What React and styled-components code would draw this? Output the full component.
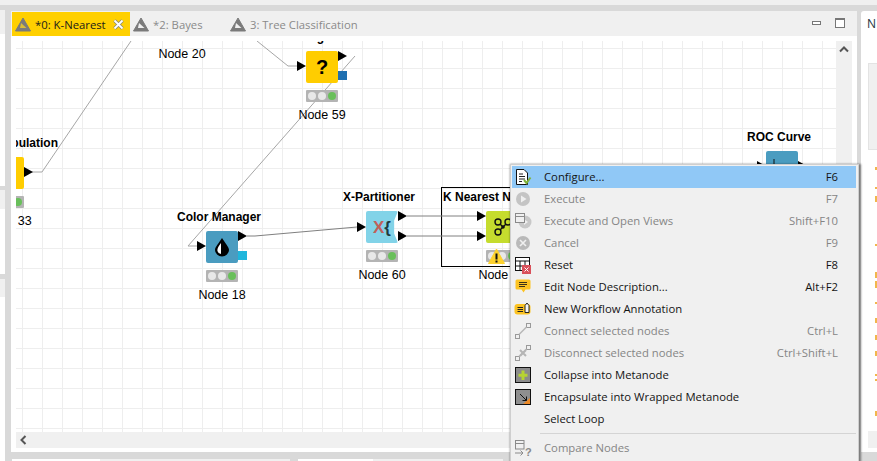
import React from 'react';
import styled, { createGlobalStyle } from 'styled-components';

const Global = createGlobalStyle`
  html, body {
    margin: 0;
    width: 877px;
    height: 461px;
    overflow: hidden;
    background: #d9d9d9;
  }
  * { box-sizing: border-box; }
`;

const UI_FONT = `"Open Sans", "Noto Sans", sans-serif`;
const NODE_FONT = `"Liberation Sans", Arial, sans-serif`;

const Page = styled.div`
  width: 877px;
  height: 461px;
  overflow: hidden;
  display: flex;
  flex-direction: column;
  background: #d9d9d9;
`;

const TopStrip = styled.div`
  height: 5px;
  flex: none;
  background: #f0f0f0;
`;

const Main = styled.div`
  flex: 1;
  display: flex;
  padding-top: 5px;
  min-height: 0;
`;

const LeftDock = styled.div`
  width: 5px;
  flex: none;
  display: flex;
  flex-direction: column;
`;

const DockPiece = styled.div`
  height: ${(p) => p.$h}px;
  margin-top: ${(p) => p.$gap || 0}px;
  background: ${(p) => (p.$tab ? '#f0f0f0' : '#fff')};
`;

const Center = styled.div`
  width: 846px;
  margin-left: 6px;
  margin-top: 1px;
  flex: none;
  display: flex;
  flex-direction: column;
`;

const Editor = styled.div`
  height: 441px;
  flex: none;
  background: #fff;
  display: flex;
  flex-direction: column;
  border-radius: 3px 3px 0 0;
`;

const TabBar = styled.div`
  height: 25px;
  flex: none;
  background: #f0f0f0;
  display: flex;
  align-items: stretch;
  padding: 1px 0 0 1px;
  font-family: ${UI_FONT};
  font-size: 11.3px;
`;

const Tab = styled.div`
  width: ${(p) => p.$w}px;
  flex: none;
  display: flex;
  align-items: center;
  gap: 4px;
  padding-left: 3px;
  color: ${(p) => (p.$active ? '#1a1a1a' : '#8a8a8a')};
  background: ${(p) => (p.$active ? '#ffd000' : 'transparent')};
  white-space: nowrap;

  svg {
    flex: none;
  }
`;

const TabClose = styled.svg`
  margin-left: 3px;
`;

const TabActions = styled.div`
  margin-left: auto;
  display: flex;
  align-items: center;
  gap: 14px;
  padding-right: 12px;
  padding-bottom: 3px;
`;

const MinButton = styled.div`
  width: 9px;
  height: 4px;
  background: #fff;
  border: 1px solid #777;
`;

const MaxButton = styled.div`
  width: 10px;
  height: 10px;
  background: #fff;
  border: 1px solid #777;
  border-top-width: 2px;
`;

const EditorBody = styled.div`
  flex: 1;
  min-height: 0;
  display: grid;
  grid-template-columns: 820px 16px;
  grid-template-rows: 391px 16px;
  padding: 5px 5px 4px 5px;
`;

const Canvas = styled.div`
  position: relative;
  overflow: hidden;
  background-color: #fff;
  background-image:
    linear-gradient(to right, #eeeeee 1px, transparent 1px),
    linear-gradient(to bottom, #eeeeee 1px, transparent 1px);
  background-size: 20px 20px;
  background-position: 6px 7px;
`;

const Scroll = styled.div`
  background: #f0f0f0;
  display: flex;
  align-items: flex-start;
  padding: ${(p) => (p.$horizontal ? '3px 0 0 3px' : '4px 0 0 3px')};
`;

const Corner = styled.div`
  background: #fff;
`;

const Wires = styled.svg`
  position: absolute;
  left: 0;
  top: 0;
  pointer-events: none;
`;

const Annotation = styled.div`
  position: absolute;
  left: 425px;
  top: 146px;
  width: 110px;
  height: 80px;
  border: 1px solid #000;
`;

const NodeWrap = styled.div`
  position: absolute;
  left: ${(p) => p.$x}px;
  top: ${(p) => p.$y}px;
  width: 32px;
  display: flex;
  flex-direction: column;
  align-items: center;
  font-family: ${NODE_FONT};
  font-size: 12.5px;
  color: #000;
`;

const NodeTitle = styled.div`
  position: absolute;
  left: 50%;
  bottom: 100%;
  margin-bottom: 7px;
  transform: translateX(calc(-50% - ${(p) => p.$shift || 3}px));
  font-size: 12px;
  font-weight: bold;
  white-space: nowrap;
  line-height: 14px;
`;

const NodeBody = styled.div`
  position: relative;
  width: 32px;
  height: 32px;
  flex: none;
  display: flex;
  align-items: center;
  justify-content: center;
`;

const NodeFace = styled.div`
  width: 32px;
  height: 32px;
  border-radius: 2px;
  background: ${(p) => p.$color};
  display: flex;
  align-items: center;
  justify-content: center;
  clip-path: ${(p) =>
    p.$notch
      ? 'polygon(0 0, 100% 0, 88% 30%, 88% 70%, 100% 100%, 0 100%)'
      : 'none'};
`;

const Port = styled.div`
  position: absolute;
  top: ${(p) => p.$y - 5}px;
  left: ${(p) => (p.$out ? 32 : -9)}px;
  width: 0;
  height: 0;
  border-top: 5px solid transparent;
  border-bottom: 5px solid transparent;
  border-left: 9px solid #000;
`;

const ModelPort = styled.div`
  position: absolute;
  left: 32px;
  top: 20px;
  width: 9px;
  height: 9px;
  background: ${(p) => p.$color};
`;

const Status = styled.div`
  margin-top: 7px;
  width: 32px;
  height: 12px;
  flex: none;
  background: #b4b4b4;
  border-radius: 1px;
  display: flex;
  align-items: center;
  justify-content: center;
  gap: 2px;
`;

const Light = styled.span`
  width: 8px;
  height: 8px;
  border-radius: 50%;
  background: ${(p) => (p.$on ? '#69bf5b' : '#e8e8e8')};
`;

const NodeLabel = styled.div`
  margin-top: 6px;
  white-space: nowrap;
  line-height: 14px;
`;

const WarnIcon = styled.svg`
  position: absolute;
  left: 2px;
  top: 37px;
`;

const Glyph = styled.span`
  font-family: ${NODE_FONT};
  font-weight: bold;
  font-size: ${(p) => p.$size}px;
  line-height: 1;
  color: ${(p) => p.$color || '#000'};
`;

const BottomTabs = styled.div`
  margin-top: 7px;
  height: 2px;
  flex: none;
  display: flex;
  padding-left: 1px;
`;

const BottomTab = styled.div`
  width: ${(p) => p.$w}px;
  margin-left: ${(p) => p.$gap || 0}px;
  background: ${(p) => (p.$tab ? '#f0f0f0' : '#fff')};
`;

const RightDock = styled.div`
  margin-left: 4px;
  margin-top: 1px;
  width: 16px;
  height: 441px;
  flex: none;
  background: #fff;
  display: flex;
  flex-direction: column;
  padding-left: 7px;
  border-radius: 3px 0 0 0;
`;

const DockTitle = styled.div`
  height: 25px;
  margin-left: -1px;
  flex: none;
  font-family: ${UI_FONT};
  font-size: 12px;
  line-height: 25px;
  color: #24323c;
  overflow: hidden;
`;

const SearchBox = styled.div`
  height: 87px;
  margin-top: 27px;
  flex: none;
  background: #f0f0f0;
  border: 1px solid #e3e3e3;
  border-right: 0;
`;

const Tick = styled.div`
  width: 2px;
  height: ${(p) => p.$h || 3}px;
  margin-left: 7px;
  margin-top: ${(p) => p.$gap}px;
  flex: none;
  background: #f1b74c;
`;

const DockFooter = styled.div`
  height: 17px;
  margin-top: auto;
  margin-bottom: 4px;
  flex: none;
  background: #f0f0f0;
`;

const Menu = styled.div`
  position: absolute;
  left: 510px;
  top: 164px;
  width: 349px;
  height: 310px;
  background: #f0f0f0;
  border: 1px solid #cfcfcf;
  box-shadow: 1px 1px 2px 1px rgba(0, 0, 0, 0.45);
  padding: 1px 2px 0 1px;
  font-family: ${UI_FONT};
  font-size: 11.3px;
`;

const MenuRow = styled.div`
  height: 22px;
  display: flex;
  align-items: center;
  padding-right: 18px;
  white-space: nowrap;
  background: ${(p) => (p.$hover ? '#90c8f6' : 'transparent')};
  color: ${(p) => (p.$off ? '#858585' : '#141414')};
`;

const MenuIcon = styled.span`
  width: 32px;
  height: 18px;
  flex: none;
  display: flex;
  justify-content: flex-start;
  padding-left: 2px;
`;

const MenuText = styled.span`
  margin-bottom: 2px;
`;

const MenuShortcut = styled.span`
  margin-left: auto;
  margin-bottom: 2px;
`;

const MenuLine = styled.div`
  height: 1px;
  margin: 3px 0 3px 28px;
  background: #d4d4d4;
`;

const Chevron = ({ d }) => (
  <svg width="10" height="10" viewBox="0 0 10 10">
    <path d={d} fill="none" stroke="#555" strokeWidth="2" />
  </svg>
);

const TabIcon = ({ active }) => (
  <svg width="16" height="15" viewBox="0 0 16 15">
    <path d="M8 1 L15.5 14 H0.5 Z" fill="#7b7b7b" stroke="#7b7b7b" strokeLinejoin="round" />
    <path d="M6 6 L11.5 11 H5 Z" fill={active ? '#d8bd3c' : '#f0f0f0'} />
  </svg>
);

const DocIcon = () => (
  <svg width="18" height="18" viewBox="0 0 18 18">
    <path d="M2.5 1.5 H10 L13.5 5 V16.5 H2.5 Z" fill="#fff" stroke="#111" />
    <path d="M5 6 H9 M5 8.5 H11 M5 11 H11 M5 13.5 H8" stroke="#222" />
    <path d="M10 12 L12.5 15 L16.5 9.5" fill="none" stroke="#7fb23a" strokeWidth="2" />
  </svg>
);

const RunIcon = () => (
  <svg width="18" height="18" viewBox="0 0 18 18">
    <circle cx="9" cy="9" r="7" fill="#c4c4c4" />
    <path d="M7 5.5 L12.5 9 L7 12.5 Z" fill="#efefef" />
  </svg>
);

const RunViewIcon = () => (
  <svg width="18" height="18" viewBox="0 0 18 18">
    <circle cx="11" cy="10" r="6.5" fill="#c8c8c8" />
    <path d="M10 7 L14 10 L10 13 Z" fill="#efefef" />
    <rect x="1.5" y="1.5" width="9" height="9" fill="#f0f0f0" stroke="#8a8a8a" />
    <path d="M1.5 4.5 H10.5" stroke="#8a8a8a" />
  </svg>
);

const CancelIcon = () => (
  <svg width="18" height="18" viewBox="0 0 18 18">
    <circle cx="9" cy="9" r="7" fill="#b9b9b9" />
    <path d="M6 6 L12 12 M12 6 L6 12" stroke="#f0f0f0" strokeWidth="1.6" />
  </svg>
);

const ResetIcon = () => (
  <svg width="18" height="18" viewBox="0 0 18 18">
    <rect x="1.5" y="1.5" width="14" height="13" fill="#fff" stroke="#111" />
    <path d="M1.5 5 H15.5 M1.5 10 H15.5 M6 5 V14.5 M11 5 V14.5" stroke="#111" />
    <rect x="8" y="9" width="9" height="9" fill="#d9505a" />
    <path d="M10.5 11.5 L14.5 15.5 M14.5 11.5 L10.5 15.5" stroke="#fff" />
  </svg>
);

const NoteIcon = () => (
  <svg width="18" height="18" viewBox="0 0 18 18">
    <path d="M3 1.5 H15 Q16.5 1.5 16.5 3 V10 Q16.5 11.5 15 11.5 H11.5 L9.5 14.5 L7.5 11.5 H3 Q1.5 11.5 1.5 10 V3 Q1.5 1.5 3 1.5 Z" fill="#fcc322" />
    <path d="M5 4.5 H13 M5 6.5 H13 M5 8.5 H11" stroke="#3a3218" />
  </svg>
);

const AnnotationIcon = () => (
  <svg width="18" height="18" viewBox="0 0 18 18">
    <rect x="0.5" y="4" width="16" height="10.5" rx="3" fill="#fcc322" />
    <path d="M3.5 7.5 H9 M3.5 9.5 H9 M3.5 11.5 H9" stroke="#222" />
    <path d="M11 5.5 L13 3 L15 5.5 V12.5 H11 Z" fill="#f5f5f5" stroke="#222" />
  </svg>
);

const ConnectIcon = ({ cut }) => (
  <svg width="18" height="18" viewBox="0 0 18 18">
    <rect x="1.5" y="12.5" width="4" height="4" fill="#f0f0f0" stroke="#9a9a9a" />
    <rect x="12.5" y="1.5" width="4" height="4" fill="#f0f0f0" stroke="#9a9a9a" />
    <path d="M5 12.5 L12.5 5" stroke="#b5b5b5" strokeWidth="1.4" />
    {cut && <path d="M6 6 L12 12 M12 6 L6 12" stroke="#b5b5b5" strokeWidth="2" />}
  </svg>
);

const CollapseIcon = () => (
  <svg width="18" height="18" viewBox="0 0 18 18">
    <rect x="1.5" y="1.5" width="15" height="15" fill="#8b8b8b" stroke="#111" />
    <path d="M9 4.5 V14 M4.5 9.2 H13.5" stroke="#b7d332" strokeWidth="3" />
  </svg>
);

const EncapsulateIcon = () => (
  <svg width="18" height="18" viewBox="0 0 18 18">
    <rect x="1.5" y="1.5" width="15" height="15" fill="#8f8f8f" stroke="#111" />
    <path d="M16 10 V16 H9 Z" fill="#ee8a26" />
    <path d="M6 6 L12.5 12.5 M8.5 12.5 H12.5 V8.5" fill="none" stroke="#111" />
  </svg>
);

const CompareIcon = () => (
  <svg width="18" height="18" viewBox="0 0 18 18">
    <rect x="1.5" y="1.5" width="8.5" height="8.5" fill="none" stroke="#8a8a8a" />
    <path d="M1.5 4.5 H10 M1 14 H9 M6.5 11.5 L9 14 L6.5 16.5" fill="none" stroke="#8a8a8a" />
    <text x="11" y="17" fontFamily="Liberation Sans" fontWeight="bold" fontSize="11" fill="#8a8a8a">?</text>
  </svg>
);

const Drop = () => (
  <svg width="18" height="20" viewBox="0 0 18 20">
    <path d="M9 1 C12 6 16 10 16 13 A7 6.5 0 0 1 2 13 C2 10 6 6 9 1 Z" fill="#000" />
    <path d="M8 6 C6 9 4 11 4.4 14 A4.5 4 0 0 0 8 17 Z" fill="#fff" />
  </svg>
);

const NetIcon = () => (
  <svg width="28" height="24" viewBox="0 0 28 24">
    <path d="M12 9 L15 12 L12 15 M15 12 L18 9" fill="none" stroke="#111" strokeWidth="1.4" />
    <circle cx="10" cy="7" r="3" fill="none" stroke="#111" strokeWidth="1.4" />
    <circle cx="10" cy="17" r="3" fill="none" stroke="#111" strokeWidth="1.4" />
    <circle cx="20" cy="7" r="3" fill="none" stroke="#111" strokeWidth="1.4" />
    <circle cx="15" cy="12" r="1.8" fill="#111" />
  </svg>
);

const RocIcon = () => (
  <svg width="32" height="32" viewBox="0 0 32 32">
    <path d="M8 8 V28 M4 24 H28" stroke="#111" />
    <path d="M14 13 H24 V20 H14 Z" fill="#d9606a" />
  </svg>
);

const Warn = () => (
  <WarnIcon width="17" height="16" viewBox="0 0 17 16">
    <path d="M8.5 1 L16.5 15.5 H0.5 Z" fill="#fdd22e" stroke="#fdd22e" strokeLinejoin="round" />
    <rect x="7.5" y="5.5" width="2" height="6" fill="#111" />
    <rect x="7.5" y="12.5" width="2" height="2" fill="#111" />
  </WarnIcon>
);

const wires = [
  { d: 'M115 0 L26 131 L8 131' },
  { d: 'M241 0 L272 25 L281 25' },
  { d: 'M339 15 L172 205 L181 205' },
  { d: 'M231 195 L239 195 L341 186', dark: true },
  { d: 'M391 175 L461 175', dark: true },
  { d: 'M391 195 L461 195', dark: true },
];

const nodes = [
  { id: 20, x: 150, y: -51, color: '#4a9cc0', label: 'Node 20' },
  {
    id: 59, x: 290, y: 10, color: '#ffcd00', label: 'Node 59', title: 'Missing Value',
    inputs: [15], outputs: [5], model: '#1f6fb0', icon: <Glyph $size={20}>?</Glyph>,
  },
  {
    id: 33, x: -24, y: 116, color: '#ffcd00', label: 'Node 33', title: 'Column Population', shift: 5,
    outputs: [15],
  },
  {
    id: 18, x: 190, y: 190, color: '#4a9cc0', label: 'Node 18', title: 'Color Manager',
    inputs: [15], outputs: [5], model: '#1fb6dc', icon: <Drop />,
  },
  {
    id: 60, x: 350, y: 170, color: '#82d3e8', label: 'Node 60', title: 'X-Partitioner', notch: true,
    inputs: [16], outputs: [5, 25],
    icon: (
      <>
        <Glyph $size={17} $color="#c0605a">X</Glyph>
        <Glyph $size={17} $color="#1d3b3f">{'{'}</Glyph>
      </>
    ),
  },
  {
    id: 61, x: 470, y: 170, color: '#c5dc2e', label: 'Node 61', title: 'K Nearest Neighbor',
    inputs: [5, 25], warn: true, icon: <NetIcon />,
  },
  {
    id: 62, x: 750, y: 110, color: '#4a9cc0', label: 'Node 62', title: 'ROC Curve',
    inputs: [15], outputs: [15], icon: <RocIcon />,
  },
];

const menu = [
  { icon: <DocIcon />, text: 'Configure...', key: 'F6', hover: true },
  { icon: <RunIcon />, text: 'Execute', key: 'F7', off: true },
  { icon: <RunViewIcon />, text: 'Execute and Open Views', key: 'Shift+F10', off: true },
  { icon: <CancelIcon />, text: 'Cancel', key: 'F9', off: true },
  { icon: <ResetIcon />, text: 'Reset', key: 'F8' },
  { icon: <NoteIcon />, text: 'Edit Node Description...', key: 'Alt+F2' },
  { icon: <AnnotationIcon />, text: 'New Workflow Annotation' },
  { icon: <ConnectIcon />, text: 'Connect selected nodes', key: 'Ctrl+L', off: true },
  { icon: <ConnectIcon cut />, text: 'Disconnect selected nodes', key: 'Ctrl+Shift+L', off: true },
  { icon: <CollapseIcon />, text: 'Collapse into Metanode' },
  { icon: <EncapsulateIcon />, text: 'Encapsulate into Wrapped Metanode' },
  { text: 'Select Loop' },
  { line: true },
  { icon: <CompareIcon />, text: 'Compare Nodes', off: true },
];

const ticks = [
  { gap: 17 }, { gap: 17, h: 2 }, { gap: 7, h: 6 }, { gap: 42, h: 2 }, { gap: 26, h: 6 },
  { gap: 3, h: 7 }, { gap: 14, h: 2 }, { gap: 14, h: 5 }, { gap: 12, h: 5 }, { gap: 11, h: 5 },
  { gap: 18, h: 2 }, { gap: 3, h: 2 }, { gap: 30, h: 5 },
];

const Node = ({ node }) => (
  <NodeWrap $x={node.x} $y={node.y}>
    {node.title && <NodeTitle $shift={node.shift}>{node.title}</NodeTitle>}
    <NodeBody>
      {(node.inputs || []).map((y) => <Port key={y} $y={y} />)}
      {(node.outputs || []).map((y) => <Port key={y} $y={y} $out />)}
      {node.model && <ModelPort $color={node.model} />}
      <NodeFace $color={node.color} $notch={node.notch}>{node.icon}</NodeFace>
    </NodeBody>
    <Status>
      <Light />
      <Light />
      <Light $on />
    </Status>
    {node.warn && <Warn />}
    <NodeLabel>{node.label}</NodeLabel>
  </NodeWrap>
);

export default function App() {
  return (
    <Page>
      <Global />
      <TopStrip />
      <Main>
        <LeftDock>
          <DockPiece $tab $h={25} />
          <DockPiece $h={155} />
          <DockPiece $tab $gap={4} $h={19} />
          <DockPiece $h={67} />
          <DockPiece $tab $gap={5} $h={18} />
          <DockPiece $h={168} />
        </LeftDock>
        <Center>
          <Editor>
            <TabBar>
              <Tab $active $w={118}>
                <TabIcon active />
                *0: K-Nearest
                <TabClose width="11" height="11" viewBox="0 0 11 11">
                  <path d="M1.5 1.5 L9.5 9.5 M9.5 1.5 L1.5 9.5" stroke="#8a8a70" strokeWidth="3.4" />
                  <path d="M1.5 1.5 L9.5 9.5 M9.5 1.5 L1.5 9.5" stroke="#fff" strokeWidth="1.8" />
                </TabClose>
              </Tab>
              <Tab $w={97}><TabIcon />*2: Bayes</Tab>
              <Tab $w={140}><TabIcon />3: Tree Classification</Tab>
              <TabActions>
                <MinButton />
                <MaxButton />
              </TabActions>
            </TabBar>
            <EditorBody>
              <Canvas>
                <Annotation />
                <Wires width="820" height="391" viewBox="0 0 820 391">
                  {wires.map((w) => (
                    <path key={w.d} d={w.d} fill="none" stroke={w.dark ? '#808080' : '#a6a6a6'} strokeWidth="1" />
                  ))}
                </Wires>
                {nodes.map((n) => <Node key={n.id} node={n} />)}
              </Canvas>
              <Scroll>
                <Chevron d="M1 6.5 L5 2.5 L9 6.5" />
              </Scroll>
              <Scroll $horizontal>
                <Chevron d="M6.5 1 L2.5 5 L6.5 9" />
              </Scroll>
              <Corner />
            </EditorBody>
          </Editor>
          <BottomTabs>
            <BottomTab $w={88} />
            <BottomTab $tab $w={190} />
            <BottomTab $gap={8} $w={75} />
            <BottomTab $tab $w={130} />
          </BottomTabs>
        </Center>
        <RightDock>
          <DockTitle>N</DockTitle>
          <SearchBox />
          {ticks.map((t, i) => <Tick key={i} $gap={t.gap} $h={t.h} />)}
          <DockFooter />
        </RightDock>
      </Main>
      <Menu>
        {menu.map((m, i) =>
          m.line ? (
            <MenuLine key={i} />
          ) : (
            <MenuRow key={i} $hover={m.hover} $off={m.off}>
              <MenuIcon>{m.icon}</MenuIcon>
              <MenuText>{m.text}</MenuText>
              {m.key && <MenuShortcut>{m.key}</MenuShortcut>}
            </MenuRow>
          )
        )}
      </Menu>
    </Page>
  );
}
